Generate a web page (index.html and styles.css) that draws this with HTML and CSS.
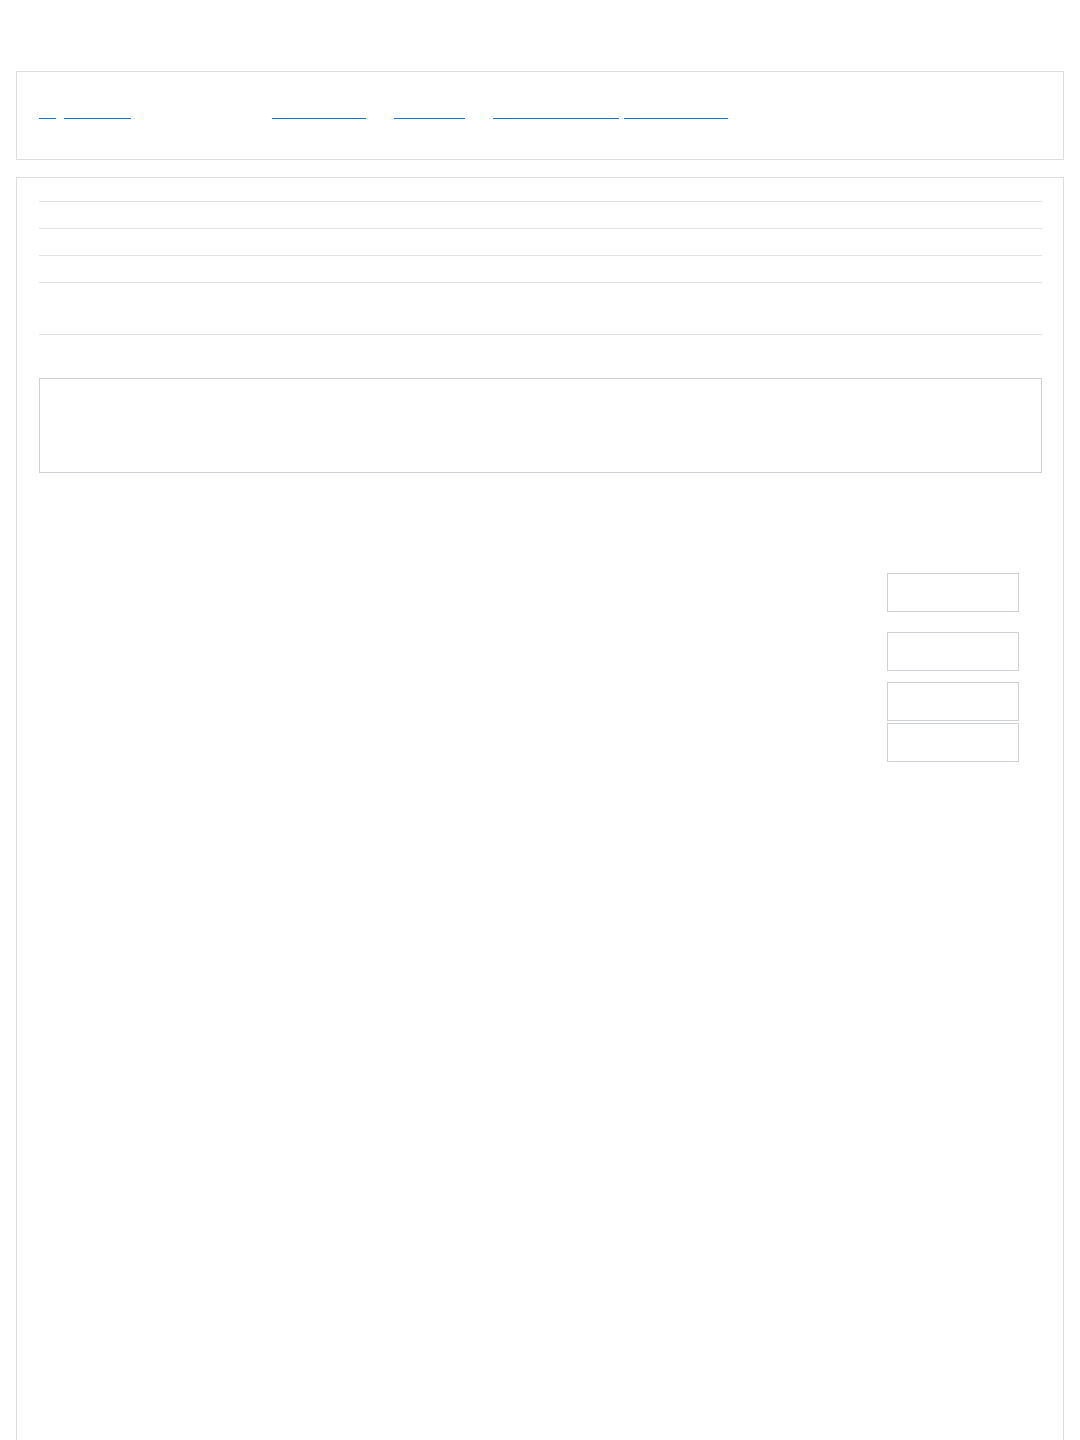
FILE: index.html
```html
<!DOCTYPE html>
<html lang="en">
<head>
    <meta charset="UTF-8">
    <meta name="viewport" content="width=device-width, initial-scale=1.0">
    <title>Record</title>
    <link rel="stylesheet" href="styles.css">
</head>
<body>
    <div class="page">
        <div class="nav">
            <a href="#" class="link w17">Up</a>
            <a href="#" class="link w67 gap8">Records</a>
            <a href="#" class="link w94 gap141">Documents</a>
            <a href="#" class="link w71 gap28">Reports</a>
            <a href="#" class="link w126 gap28">Account settings</a>
            <a href="#" class="link w104 gap5">Help</a>
        </div>

        <div class="main">
            <div class="info">
                <div class="row">Name</div>
                <div class="row">Area</div>
                <div class="row">Identifier</div>
                <div class="row tall">Description</div>
            </div>

            <textarea class="notes" placeholder="Notes"></textarea>

            <div class="actions">
                <button class="btn">Edit</button>
                <button class="btn gap20">Duplicate</button>
                <button class="btn gap11">Export</button>
                <button class="btn gap2">Delete</button>
            </div>
        </div>
    </div>
</body>
</html>
```

FILE: styles.css
```css
body {
    margin: 0;
    font-family: "Liberation Sans", Arial, sans-serif;
    font-size: 14px;
    background-color: #fff;
    color: transparent;
}
.page {
    padding: 71px 16px 0;
}
.nav {
    display: flex;
    align-items: flex-start;
    height: 89px;
    padding: 29px 22px 0;
    box-sizing: border-box;
    border: 1px solid #dedede;
}
.link {
    display: block;
    height: 17px;
    font-size: 11px;
    line-height: 17px;
    white-space: nowrap;
    color: transparent;
    text-decoration: none;
    border-bottom: 1px solid #0a78dc;
}
.w17 { width: 17px; }
.w67 { width: 67px; }
.w94 { width: 94px; }
.w71 { width: 71px; }
.w104 { width: 104px; }
.w126 { width: 126px; }
.gap5 { margin-left: 5px; }
.gap8 { margin-left: 8px; }
.gap28 { margin-left: 28px; }
.gap141 { margin-left: 141px; }
.main {
    margin-top: 17px;
    min-height: 1300px;
    padding: 23px 21px 0 22px;
    border: 1px solid #dedede;
    border-bottom: none;
}
.info {
    border-bottom: 1px solid #e2e2e2;
}
.row {
    height: 26px;
    line-height: 26px;
    border-top: 1px solid #e2e2e2;
}
.row.tall {
    height: 51px;
}
.notes {
    display: block;
    width: 100%;
    height: 95px;
    margin-top: 43px;
    padding: 8px;
    box-sizing: border-box;
    border: 1px solid #cdd1d7;
    border-radius: 0;
    resize: none;
    font-family: inherit;
    color: transparent;
}
.notes::placeholder {
    color: transparent;
}
.actions {
    display: flex;
    flex-direction: column;
    align-items: flex-end;
    margin-top: 100px;
    padding-right: 23px;
}
.btn {
    display: block;
    width: 132px;
    height: 39px;
    padding: 0;
    border: 1px solid #cdd1d7;
    background-color: #fff;
    color: transparent;
    font-family: inherit;
    cursor: pointer;
}
.btn.gap2 { margin-top: 2px; }
.btn.gap11 { margin-top: 11px; }
.btn.gap20 { margin-top: 20px; }
```
